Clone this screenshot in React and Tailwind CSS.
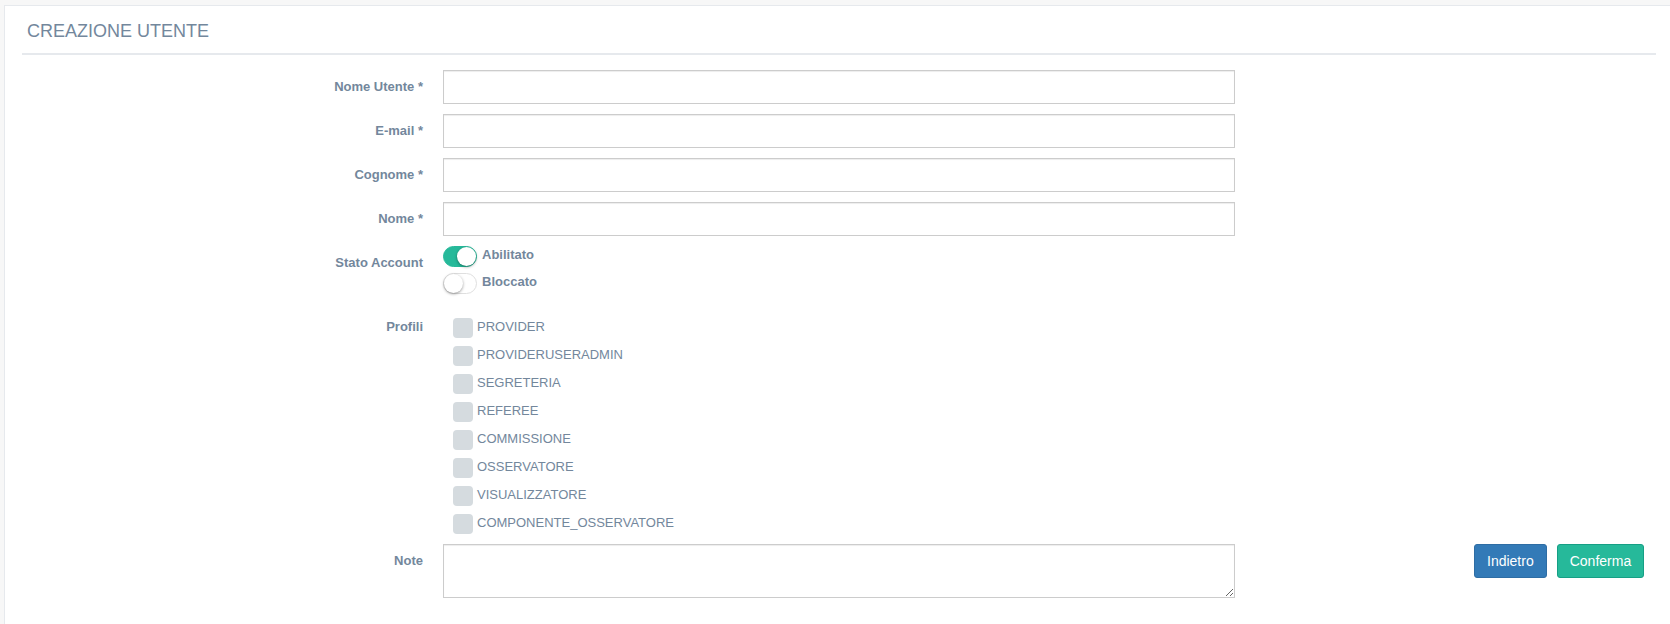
import React from "react";

const profili = [
  "PROVIDER",
  "PROVIDERUSERADMIN",
  "SEGRETERIA",
  "REFEREE",
  "COMMISSIONE",
  "OSSERVATORE",
  "VISUALIZZATORE",
  "COMPONENTE_OSSERVATORE",
];

function Label({ children }) {
  return (
    <div className="w-[401px] shrink-0 text-right pt-[8px] text-[13px] leading-[1.4286] font-bold text-[#73879C]">
      {children}
    </div>
  );
}

function TextRow({ label }) {
  return (
    <div className="flex mb-[10px]">
      <Label>{label}</Label>
      <input
        type="text"
        className="ml-[20px] w-[792px] h-[34px] border border-[#CCCCCC] bg-white shadow-[inset_0_1px_1px_rgba(0,0,0,0.075)] outline-none px-3 text-[13px]"
      />
    </div>
  );
}

function Toggle({ on, label }) {
  return (
    <div className="flex items-start h-[27px]">
      <div
        className={
          on
            ? "flex justify-end w-[34px] h-[21px] rounded-full border border-[#26B99A] bg-[#26B99A]"
            : "flex justify-start w-[34px] h-[21px] rounded-full border border-[#DFDFDF] bg-white"
        }
      >
        <div className="w-[19px] h-[19px] rounded-full bg-white shadow-[0_1px_3px_rgba(0,0,0,0.4)]" />
      </div>
      <span className="ml-[5px] text-[13px] leading-[1.4286] font-bold text-[#73879C]">
        {label}
      </span>
    </div>
  );
}

export default function App() {
  return (
    <div className="w-[1670px] h-[624px] overflow-hidden bg-[#F7F7F7] pt-[5px] pl-[4px] font-['Liberation_Sans',Arial,sans-serif] antialiased">
      <div className="w-[1670px] min-h-[700px] bg-white border border-[#E6E9ED] px-[17px] pt-[10px]">
        <div className="border-b-2 border-[#E6E9ED] pt-[5px] pb-[12px] pl-[5px]">
          <h2 className="text-[18px] leading-[20px] font-normal text-[#73879C]">
            CREAZIONE UTENTE
          </h2>
        </div>

        <div className="mt-[15px]">
          <TextRow label="Nome Utente *" />
          <TextRow label="E-mail *" />
          <TextRow label="Cognome *" />
          <TextRow label="Nome *" />

          <div className="flex mb-[10px]">
            <Label>Stato Account</Label>
            <div className="ml-[20px] flex flex-col">
              <Toggle on label="Abilitato" />
              <Toggle label="Bloccato" />
            </div>
          </div>

          <div className="flex mb-[2px]">
            <Label>Profili</Label>
            <div className="ml-[30px] pt-[8px] flex flex-col">
              {profili.map((p) => (
                <div key={p} className="flex items-start h-[28px]">
                  <div className="w-[20px] h-[20px] rounded-[4px] bg-[#D5DBDF]" />
                  <span className="ml-[4px] text-[13px] leading-[1.4286] text-[#73879C]">
                    {p}
                  </span>
                </div>
              ))}
            </div>
          </div>

          <div className="flex">
            <Label>Note</Label>
            <textarea className="ml-[20px] w-[792px] h-[54px] border border-[#CCCCCC] bg-white shadow-[inset_0_1px_1px_rgba(0,0,0,0.075)] outline-none px-3 text-[13px]" />
            <div className="ml-[239px] flex items-start gap-[10px]">
              <button className="h-[34px] px-[12px] rounded-[3px] border border-[#2E6DA4] bg-[#337AB7] text-white text-[14px]">
                Indietro
              </button>
              <button className="h-[34px] px-[12px] rounded-[3px] border border-[#169F85] bg-[#26B99A] text-white text-[14px]">
                Conferma
              </button>
            </div>
          </div>
        </div>
      </div>
    </div>
  );
}
